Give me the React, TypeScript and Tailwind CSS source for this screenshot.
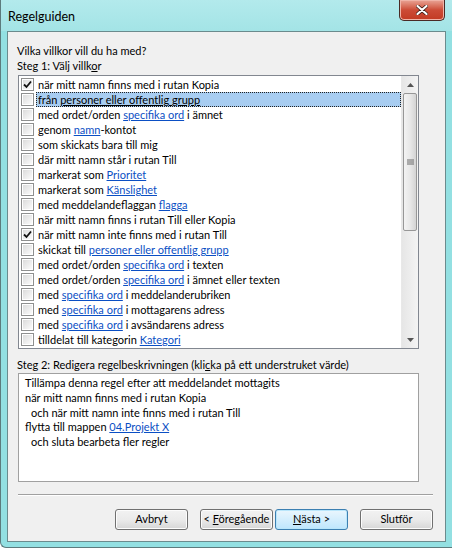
import React from 'react';

type Seg = { t: string; link?: boolean };

const rows: { checked?: boolean; selected?: boolean; segs: Seg[] }[] = [
  { checked: true, segs: [{ t: 'när mitt namn finns med i rutan Kopia' }] },
  { selected: true, segs: [{ t: 'från ' }, { t: 'personer eller offentlig grupp', link: true }] },
  { segs: [{ t: 'med ordet/orden ' }, { t: 'specifika ord', link: true }, { t: ' i ämnet' }] },
  { segs: [{ t: 'genom ' }, { t: 'namn', link: true }, { t: '-kontot' }] },
  { segs: [{ t: 'som skickats bara till mig' }] },
  { segs: [{ t: 'där mitt namn står i rutan Till' }] },
  { segs: [{ t: 'markerat som ' }, { t: 'Prioritet', link: true }] },
  { segs: [{ t: 'markerat som ' }, { t: 'Känslighet', link: true }] },
  { segs: [{ t: 'med meddelandeflaggan ' }, { t: 'flagga', link: true }] },
  { segs: [{ t: 'när mitt namn finns i rutan Till eller Kopia' }] },
  { checked: true, segs: [{ t: 'när mitt namn inte finns med i rutan Till' }] },
  { segs: [{ t: 'skickat till ' }, { t: 'personer eller offentlig grupp', link: true }] },
  { segs: [{ t: 'med ordet/orden ' }, { t: 'specifika ord', link: true }, { t: ' i texten' }] },
  { segs: [{ t: 'med ordet/orden ' }, { t: 'specifika ord', link: true }, { t: ' i ämnet eller texten' }] },
  { segs: [{ t: 'med ' }, { t: 'specifika ord', link: true }, { t: ' i meddelanderubriken' }] },
  { segs: [{ t: 'med ' }, { t: 'specifika ord', link: true }, { t: ' i mottagarens adress' }] },
  { segs: [{ t: 'med ' }, { t: 'specifika ord', link: true }, { t: ' i avsändarens adress' }] },
  { segs: [{ t: 'tilldelat till kategorin ' }, { t: 'Kategori', link: true }] },
];

function CheckBox({ checked }: { checked?: boolean }) {
  return (
    <span className="w-[13px] h-[13px] shrink-0 border border-[#8e8f8f] bg-white p-px">
      <span className="flex w-full h-full items-center justify-center bg-gradient-to-br from-[#dcdcdc] to-[#fbfbfb]">
        {checked && (
          <svg width="9" height="9" viewBox="0 0 9 9">
            <path d="M1 4.5 L3.5 7 L8 1.5" fill="none" stroke="#111" strokeWidth="1.8" />
          </svg>
        )}
      </span>
    </span>
  );
}

function Button({ children, focused }: { children: React.ReactNode; focused?: boolean }) {
  return (
    <div
      className={`w-[73px] h-[21px] flex items-center justify-center rounded-[3px] border text-black whitespace-pre ${
        focused
          ? 'border-[#3c7fb1] bg-gradient-to-b from-[#eaf6fd] to-[#bee6fd] shadow-[inset_0_0_0_1px_#b9e6fb]'
          : 'border-[#707070] bg-gradient-to-b from-[#f2f2f2] via-[#ebebeb] to-[#d6d6d6] shadow-[inset_0_0_0_1px_#fcfcfc]'
      }`}
    >
      <span>{children}</span>
    </div>
  );
}

export default function App() {
  return (
    <div
      className="w-[452px] h-[548px] flex flex-col bg-[#93e0e2] border-l border-b border-[#5d7b7d] rounded-bl-[6px] overflow-hidden"
      style={{ fontFamily: 'Lato, "Liberation Sans", sans-serif' }}
    >
      {/* titelrad */}
      <div className="h-[31px] shrink-0 flex items-start bg-gradient-to-b from-[#b3eaec] to-[#a3e4e6]">
        <div className="pl-[7px] pt-[9px] text-[12.5px] leading-[15px] text-black">Regelguiden</div>
        <div className="ml-auto mr-[7px] w-[46px] h-[21px] rounded-b-[5px] border border-t-0 border-[#4a2a25] bg-gradient-to-b from-[#e8a496] via-[#cc4b36] to-[#c23a22] flex items-center justify-center shadow-[inset_0_0_0_1px_#f0b4a8]">
          <svg width="12" height="10" viewBox="0 0 12 10">
            <path d="M1.5 1 L10.5 9 M10.5 1 L1.5 9" stroke="#3a1a14" strokeWidth="3.6" strokeLinecap="round" />
            <path d="M1.5 1 L10.5 9 M10.5 1 L1.5 9" stroke="#ffffff" strokeWidth="2.2" strokeLinecap="round" />
          </svg>
        </div>
      </div>

      {/* klientyta */}
      <div className="mx-[6px] h-[511px] shrink-0 border border-[#6b8b8d] bg-[#f0f0f0] flex flex-col text-[11px] text-black">
        <div className="mt-[11px] ml-[9px] leading-[15px]">Vilka villkor vill du ha med?</div>
        <div className="ml-[9px] leading-[15px]">
          Steg 1: Välj villk<span className="underline">o</span>r
        </div>

        <div className="mt-[2px] ml-[10px] w-[401px] h-[274px] border border-[#828790] bg-white flex">
          <div className="flex-1 flex flex-col pt-px overflow-hidden">
            {rows.map((r, i) => (
              <div key={i} className="h-[15px] flex items-center pl-[2px]">
                <CheckBox checked={r.checked} />
                <div
                  className={`ml-[2px] h-[15px] flex-1 pl-[2px] leading-[15px] whitespace-pre overflow-hidden ${
                    r.selected ? 'bg-[#a8cdf1] outline outline-1 outline-dotted outline-[#222] -outline-offset-1' : ''
                  }`}
                >
                  {r.segs.map((s, j) => (
                    <span
                      key={j}
                      className={s.link ? (r.selected ? 'underline' : 'underline text-[#0b4fc4]') : ''}
                    >
                      {s.t}
                    </span>
                  ))}
                </div>
              </div>
            ))}
          </div>
          {/* rullningslist */}
          <div className="w-[17px] shrink-0 flex flex-col bg-gradient-to-r from-[#e6e6e6] to-[#f4f4f4] border-l border-[#e8e8e8]">
            <div className="h-[17px] flex items-center justify-center">
              <svg width="7" height="4" viewBox="0 0 7 4">
                <path d="M0 4 L3.5 0 L7 4 Z" fill="#555" />
              </svg>
            </div>
            <div className="mx-px h-[138px] rounded-[2px] border border-[#979797] bg-gradient-to-r from-[#f3f3f3] via-[#e8e8e8] to-[#d4d4d4] flex items-center justify-center">
              <svg width="7" height="7" viewBox="0 0 7 7">
                <path d="M0 1 H7 M0 3 H7 M0 5 H7" stroke="#6b6b6b" strokeWidth="1" />
              </svg>
            </div>
            <div className="flex-1" />
            <div className="h-[17px] flex items-center justify-center">
              <svg width="7" height="4" viewBox="0 0 7 4">
                <path d="M0 0 L3.5 4 L7 0 Z" fill="#555" />
              </svg>
            </div>
          </div>
        </div>

        <div className="mt-[8px] ml-[9px] leading-[15px]">
          Steg 2: Redigera regelbeskrivningen (kli<span className="underline">c</span>ka på ett understruket värde)
        </div>
        <div className="mt-px ml-[10px] w-[401px] h-[109px] border border-[#a0a0a0] bg-white pt-[2px] pl-[6px] leading-[14.75px]">
          <div>Tillämpa denna regel efter att meddelandet mottagits</div>
          <div>när mitt namn finns med i rutan Kopia</div>
          <div className="pl-[6px]">och när mitt namn inte finns med i rutan Till</div>
          <div className="whitespace-pre">
            flytta till mappen <span className="underline text-[#0b4fc4]">04.Projekt X</span>
          </div>
          <div className="pl-[6px]">och sluta bearbeta fler regler</div>
        </div>

        <div className="mt-[12px] ml-[10px] w-[415px] h-[2px] border-t border-[#a0a0a0] border-b border-b-white" />

        <div className="mt-[13px] ml-[107px] flex">
          <Button>Avbryt</Button>
          <div className="ml-[12px]" />
          <Button>
            &lt; <span className="underline">F</span>öregående
          </Button>
          <div className="ml-[2px]" />
          <Button focused>
            <span className="underline">N</span>ästa &gt;
          </Button>
          <div className="ml-[12px]" />
          <Button>Slutför</Button>
        </div>
      </div>
    </div>
  );
}
